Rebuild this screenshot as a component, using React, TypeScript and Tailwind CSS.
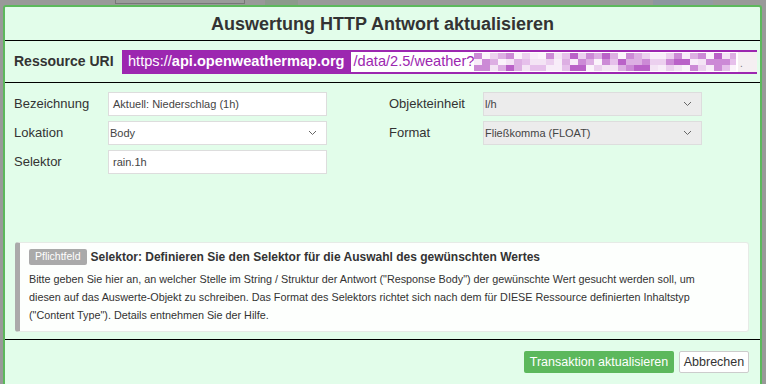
import React from "react";

const font = { fontFamily: '"Liberation Sans", Arial, sans-serif' };

// pixelated blocks standing in for the obfuscated API key
const blockColors = ["#ecd0ef", "#ddafe3", "#f4e4f5", "#cc8ad6", "#fbf3fb", "#ba62c8", "#e6c0eb", "#f8edf9"];

function Pixelated() {
    const cols = 33;
    const rows = 3;
    const rects = [];
    let seed = 7;
    for (let r = 0; r < rows; r++) {
        for (let c = 0; c < cols; c++) {
            seed = (seed * 9301 + 49297) % 233280;
            const idx = Math.floor((seed / 233280) * blockColors.length);
            rects.push(<rect key={r + "-" + c} x={c * 8} y={r * 6} width={8} height={6} fill={blockColors[idx]} />);
        }
    }
    return (
        <svg width={262} height={18} className="shrink-0">
            {rects}
        </svg>
    );
}

function Chevron() {
    return (
        <svg width="9" height="6" viewBox="0 0 9 6" className="shrink-0">
            <path d="M1 1 L4.5 4.5 L8 1" fill="none" stroke="#666" strokeWidth="1" />
        </svg>
    );
}

interface FieldProps {
    label: string;
    value: string;
    select?: boolean;
    disabled?: boolean;
}

const Field: React.FC<FieldProps> = ({ label, value, select, disabled }) => {
    return (
        <div className="flex items-center h-[24px]">
            <div className="w-[94px] text-[13px] text-[#333]">{label}</div>
            <div
                className={
                    "w-[219px] h-[24px] border flex items-center justify-between text-[11px] text-[#444] " +
                    (disabled ? "bg-[#ececec] border-[#ddd] pl-[1px] pr-[9px]" : select ? "bg-white border-[#ddd] pl-[1px] pr-[9px]" : "bg-white border-[#ddd] pl-[4px]")
                }>
                <span>{value}</span>
                {select && <Chevron />}
            </div>
        </div>
    );
};

export default function App() {
    return (
        <div className="w-[766px] h-[384px] bg-[#999] overflow-hidden flex flex-col" style={font}>
            {/* bits of the page behind the dialog */}
            <div className="h-[5px] flex shrink-0">
                <div className="ml-[115px] w-[130px] h-[4px] border border-t-0 border-[#777] bg-[#9b9b9b]" />
                <div className="ml-[20px] w-[33px] h-[5px] bg-[#8c9a8c]" />
                <div className="ml-[355px] w-[27px] h-[5px] bg-[#8d96a0]" />
                <div className="w-[33px] h-[5px] bg-[#939aa2]" />
            </div>
            <div className="ml-[3px] w-[759px] flex-1 bg-[#e2fdea] border-2 border-b-0 border-[#5cb85c] rounded-t-[3px] flex flex-col">
                <div className="h-[33px] flex items-center justify-center text-[18px] font-bold text-[#333] pt-[1px]">
                    Auswertung HTTP Antwort aktualisieren
                </div>
                <div className="border-t border-black" />
                <div className="h-[41px] flex items-center pl-[9px]">
                    <div className="w-[108px] text-[14px] font-bold text-[#333]">Ressource URI</div>
                    <div className="h-[24px] flex items-center bg-[#9c27b0] text-white text-[14.6px] px-[6px]">
                        https://<span className="font-bold">api.openweathermap.org</span>
                    </div>
                    <div className="h-[24px] flex-1 mr-[3px] flex items-center bg-white border-y-2 border-[#9c27b0] text-[#9c27b0] text-[14.6px] pl-[3px]">
                        <span>/data/2.5/weather?</span>
                        <Pixelated />
                        <div className="ml-auto w-[19px] h-full bg-[#f5eff2] flex items-end pb-[3px] pl-[2px] text-[10px] leading-none text-[#777]">.</div>
                    </div>
                </div>
                <div className="border-t border-black" />
                <div className="h-[256px] px-[9px] pt-[9px] flex flex-col">
                    <div className="grid grid-cols-[313px_313px] gap-x-[62px]">
                        <div className="flex flex-col gap-[5px]">
                            <Field label="Bezeichnung" value="Aktuell: Niederschlag (1h)" />
                            <Field label="Lokation" value="Body" select />
                            <Field label="Selektor" value="rain.1h" />
                        </div>
                        <div className="flex flex-col gap-[5px]">
                            <Field label="Objekteinheit" value="l/h" select disabled />
                            <Field label="Format" value="Fließkomma (FLOAT)" select disabled />
                        </div>
                    </div>
                    <div className="mt-auto mb-[7px] ml-[1px] mr-[2px] h-[90px] bg-[#fdfffd] border border-[#e6ebe6] border-l-[5px] border-l-[#aaa] rounded-[3px] pl-[9px] pt-[5px] text-[#333]">
                        <div className="flex items-center gap-[4px]">
                            <span className="bg-[#aaa] text-white text-[10.5px] px-[6px] h-[16px] flex items-center rounded-[2px]">Pflichtfeld</span>
                            <span className="text-[12px] font-bold">Selektor: Definieren Sie den Selektor für die Auswahl des gewünschten Wertes</span>
                        </div>
                        <div className="text-[10.8px] leading-[18px] mt-[4px] pr-[40px]">
                            Bitte geben Sie hier an, an welcher Stelle im String / Struktur der Antwort ("Response Body") der gewünschte Wert gesucht werden soll, um diesen auf das Auswerte-Objekt zu schreiben. Das Format des Selektors richtet sich nach dem für DIESE Ressource definierten Inhaltstyp ("Content Type"). Details entnehmen Sie der Hilfe.
                        </div>
                    </div>
                </div>
                <div className="border-t border-black" />
                <div className="flex justify-end gap-[5px] pt-[11px] pr-[11px]">
                    <button className="h-[22px] w-[150px] bg-[#5cb85c] text-white text-[12.5px] rounded-[2px]">Transaktion aktualisieren</button>
                    <button className="h-[22px] w-[70px] bg-white border border-[#ccc] text-[#333] text-[12.5px] rounded-[2px]">Abbrechen</button>
                </div>
            </div>
        </div>
    );
}
